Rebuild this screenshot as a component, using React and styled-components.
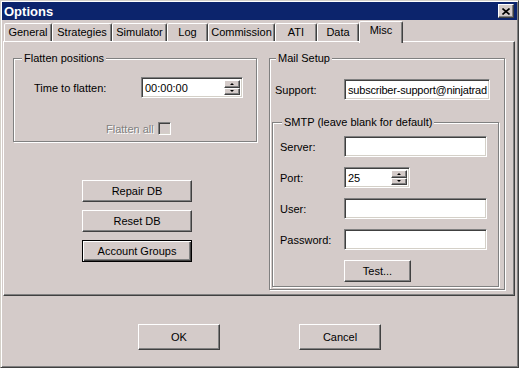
import React from "react";
import styled, { createGlobalStyle, css } from "styled-components";

const BG = "#d4cbc9";

const GlobalStyle = createGlobalStyle`
  html, body {
    margin: 0;
    padding: 0;
    background: ${BG};
  }
  * {
    box-sizing: border-box;
  }
`;

const raised = css`
  border-style: solid;
  border-width: 1px;
  border-color: #fff #404040 #404040 #fff;
  box-shadow: inset -1px -1px 0 #808080;
`;

const sunken = css`
  border-style: solid;
  border-width: 1px;
  border-color: #808080 #fff #fff #808080;
  box-shadow: inset 1px 1px 0 #404040, inset -1px -1px 0 #d4d0c8;
`;

const Window = styled.div`
  width: 519px;
  height: 368px;
  padding: 1px;
  background: ${BG};
  border: 1px solid;
  border-color: #d4d0c8 #404040 #404040 #d4d0c8;
  box-shadow: inset 1px 1px 0 #fff, inset -1px -1px 0 #808080;
  display: flex;
  flex-direction: column;
  font-family: "Liberation Sans", Arial, sans-serif;
  font-size: 11px;
  color: #000;
`;

const TitleBar = styled.div`
  height: 18px;
  background: #0c246c;
  display: flex;
  align-items: center;
  justify-content: space-between;
  padding: 0 3px 0 2px;
`;

const Title = styled.span`
  color: #fff;
  font-weight: bold;
  font-size: 13px;
`;

const CloseButton = styled.div`
  width: 16px;
  height: 14px;
  background: ${BG};
  ${raised}
  display: flex;
  align-items: center;
  justify-content: center;
`;

const TabStrip = styled.div`
  margin-top: 1px;
  height: 20px;
  padding-left: 2px;
  display: flex;
  align-items: flex-end;
  position: relative;
  z-index: 1;
`;

const Tab = styled.div`
  width: ${(p) => p.$w}px;
  height: ${(p) => (p.$active ? 22 : 18)}px;
  margin-bottom: ${(p) => (p.$active ? -2 : 0)}px;
  background: ${BG};
  border-style: solid;
  border-width: 1px 1px 0 1px;
  border-color: #fff #404040 transparent #fff;
  border-radius: 2px 2px 0 0;
  box-shadow: inset -1px 0 0 #808080;
  display: flex;
  justify-content: center;
  padding-top: 2px;
  line-height: 13px;
`;

const Panel = styled.div`
  margin-left: 1px;
  width: 512px;
  height: 255px;
  border-style: solid;
  border-width: 1px;
  border-color: #fff #404040 #404040 #fff;
  box-shadow: inset -1px -1px 0 #808080;
  display: flex;
  gap: 12px;
  padding: 16px 0 0 9px;
`;

const Column = styled.div`
  display: flex;
  flex-direction: column;
  width: ${(p) => p.$w}px;
`;

const Group = styled.div`
  position: relative;
  width: ${(p) => p.$w}px;
  height: ${(p) => p.$h}px;
  margin-left: ${(p) => p.$ml || 0}px;
  margin-top: ${(p) => p.$mt || 0}px;
  border: 1px solid #808080;
  box-shadow: inset 1px 1px 0 #fff, 1px 1px 0 #fff;
  padding: ${(p) => p.$pad};
  display: flex;
  flex-direction: column;
`;

const Legend = styled.span`
  position: absolute;
  top: -7px;
  left: ${(p) => p.$left}px;
  padding: 0 2px;
  background: ${BG};
  line-height: 13px;
`;

const Row = styled.div`
  display: flex;
  align-items: center;
  margin-top: ${(p) => p.$mt || 0}px;
  padding-left: ${(p) => p.$pl || 0}px;
`;

const Label = styled.span`
  width: ${(p) => p.$w}px;
  flex: none;
  color: ${(p) => (p.$disabled ? "#808080" : "#000")};
  text-shadow: ${(p) => (p.$disabled ? "1px 1px 0 #fff" : "none")};
`;

const Field = styled.div`
  width: ${(p) => p.$w}px;
  height: 21px;
  background: #fff;
  ${sunken}
  display: flex;
  align-items: center;
  padding-left: 3px;
  white-space: nowrap;
  letter-spacing: ${(p) => p.$ls || 0}px;
  position: relative;
`;

const SpinBox = styled.div`
  position: absolute;
  top: 2px;
  right: 2px;
  bottom: 2px;
  width: 16px;
  display: flex;
  flex-direction: column;
`;

const SpinHalf = styled.div`
  flex: 1;
  background: ${BG};
  ${raised}
  display: flex;
  align-items: center;
  justify-content: center;
  &::after {
    content: "";
    border-left: 2px solid transparent;
    border-right: 2px solid transparent;
    ${(p) =>
      p.$down
        ? "border-top: 2px solid #000;"
        : "border-bottom: 2px solid #000;"}
  }
`;

const CheckBox = styled.div`
  width: 13px;
  height: 13px;
  margin-left: 4px;
  ${sunken}
`;

const Button = styled.div`
  width: ${(p) => p.$w}px;
  height: ${(p) => p.$h || 22}px;
  margin-top: ${(p) => p.$mt || 0}px;
  margin-left: ${(p) => p.$ml || 0}px;
  background: ${BG};
  display: flex;
  align-items: center;
  justify-content: center;
  ${(p) =>
    p.$default
      ? css`
          border: 1px solid #000;
          box-shadow: inset 1px 1px 0 #fff, inset -1px -1px 0 #404040,
            inset -2px -2px 0 #808080;
        `
      : raised}
`;

const Footer = styled.div`
  flex: 1;
  display: flex;
  justify-content: center;
  gap: 79px;
  padding-top: 28px;
`;

const tabs = [
  ["General", 48],
  ["Strategies", 60],
  ["Simulator", 55],
  ["Log", 41],
  ["Commission", 67],
  ["ATI", 42],
  ["Data", 42],
  ["Misc", 44],
];

function Spin() {
  return (
    <SpinBox>
      <SpinHalf />
      <SpinHalf $down />
    </SpinBox>
  );
}

export default function App() {
  return (
    <>
      <GlobalStyle />
      <Window>
        <TitleBar>
          <Title>Options</Title>
          <CloseButton>
            <svg width="8" height="7" viewBox="0 0 8 7">
              <path d="M0.5 0.5 L7.5 6.5 M7.5 0.5 L0.5 6.5" stroke="#000" strokeWidth="1.6" />
            </svg>
          </CloseButton>
        </TitleBar>
        <TabStrip>
          {tabs.map(([name, w]) => (
            <Tab key={name} $w={w} $active={name === "Misc"}>
              {name}
            </Tab>
          ))}
        </TabStrip>
        <Panel>
          <Column $w={244}>
            <Group $w={244} $h={84} $pad="18px 0 0 20px">
              <Legend $left={8}>Flatten positions</Legend>
              <Row>
                <Label $w={107}>Time to flatten:</Label>
                <Field $w={102}>
                  00:00:00
                  <Spin />
                </Field>
              </Row>
              <Row $mt={24} $pl={72}>
                <Label $disabled>Flatten all</Label>
                <CheckBox />
              </Row>
            </Group>
            <Button $w={110} $mt={38} $ml={69}>Repair DB</Button>
            <Button $w={110} $mt={8} $ml={69}>Reset DB</Button>
            <Button $w={110} $mt={8} $ml={69} $default>
              Account Groups
            </Button>
          </Column>
          <Column $w={236}>
            <Group $w={236} $h={232} $pad="20px 0 0 5px">
              <Legend $left={6}>Mail Setup</Legend>
              <Row>
                <Label $w={69}>Support:</Label>
                <Field $w={146} $ls={-0.2}>subscriber-support@ninjatrad</Field>
              </Row>
              <Group $w={227} $h={165} $ml={-3} $mt={22} $pad="13px 0 0 7px">
                <Legend $left={9}>SMTP (leave blank for default)</Legend>
                <Row>
                  <Label $w={64}>Server:</Label>
                  <Field $w={143} />
                </Row>
                <Row $mt={10}>
                  <Label $w={64}>Port:</Label>
                  <Field $w={66}>
                    25
                    <Spin />
                  </Field>
                </Row>
                <Row $mt={10}>
                  <Label $w={64}>User:</Label>
                  <Field $w={143} />
                </Row>
                <Row $mt={10}>
                  <Label $w={64}>Password:</Label>
                  <Field $w={143} />
                </Row>
                <Button $w={67} $mt={10} $ml={64}>Test...</Button>
              </Group>
            </Group>
          </Column>
        </Panel>
        <Footer>
          <Button $w={82} $h={26}>OK</Button>
          <Button $w={82} $h={26}>Cancel</Button>
        </Footer>
      </Window>
    </>
  );
}
